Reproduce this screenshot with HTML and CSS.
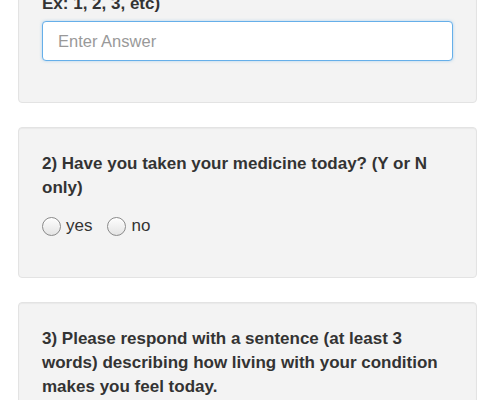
FILE: index.html
```
<!DOCTYPE html>
<html lang="en">
<head>
<meta charset="utf-8">
<title>Daily Check-in</title>
<link rel="stylesheet" href="styles.css">
</head>
<body>
<div class="survey">
  <form class="well first">
    <label class="question" for="q1">1) How many doses did you take? (Numbers,<br>Ex: 1, 2, 3, etc)</label>
    <input id="q1" class="answer" type="text" placeholder="Enter Answer">
  </form>

  <form class="well">
    <label class="question">2) Have you taken your medicine today? (Y or N only)</label>
    <div class="choices">
      <label class="choice"><input type="radio" name="q2" value="yes"> yes</label>
      <label class="choice"><input type="radio" name="q2" value="no"> no</label>
    </div>
  </form>

  <form class="well">
    <label class="question" for="q3">3) Please respond with a sentence (at least 3 words) describing how living with your condition makes you feel today.</label>
    <input id="q3" class="answer" type="text" placeholder="Enter Answer">
  </form>
</div>
</body>
</html>
```

FILE: styles.css
```
body {
    margin: 0;
    background: #fff;
    color: #333;
    font-family: "Helvetica Neue", "Liberation Sans", Arial, sans-serif;
    font-size: 17px;
    line-height: 24px;
}
.survey {
    padding: 0 18px;
    margin-top: -57px;
}
.well {
    background-color: #f3f3f3;
    border: 1px solid #e3e3e3;
    border-radius: 4px;
    box-shadow: inset 0 1px 1px rgba(0, 0, 0, 0.04);
    padding: 24px 23px 40px;
    margin: 0 0 24px;
}
.well.first {
    padding-bottom: 41px;
}
.question {
    display: block;
    font-weight: bold;
    margin-bottom: 5px;
}
.answer {
    display: block;
    box-sizing: border-box;
    width: 100%;
    height: 40px;
    padding: 0 15px;
    font-family: inherit;
    font-size: 16.5px;
    color: #555;
    background: #fff;
    border: 1px solid #66afe9;
    border-radius: 4px;
    outline: none;
    box-shadow: 0 0 3px rgba(102, 175, 233, 0.5);
}
.answer::placeholder {
    color: #999;
}
.choices {
    display: flex;
    gap: 15px;
    padding: 10px 0 0;
    line-height: 22px;
}
.choice {
    display: flex;
    align-items: center;
    gap: 5px;
}
.choice input {
    appearance: none;
    -webkit-appearance: none;
    margin: 0;
    width: 19px;
    height: 19px;
    border: 1px solid #8a8a8a;
    border-radius: 50%;
    background: linear-gradient(#fdfdfd, #e4e4e4);
    box-shadow: inset 0 1px 1px #fff;
}
```
